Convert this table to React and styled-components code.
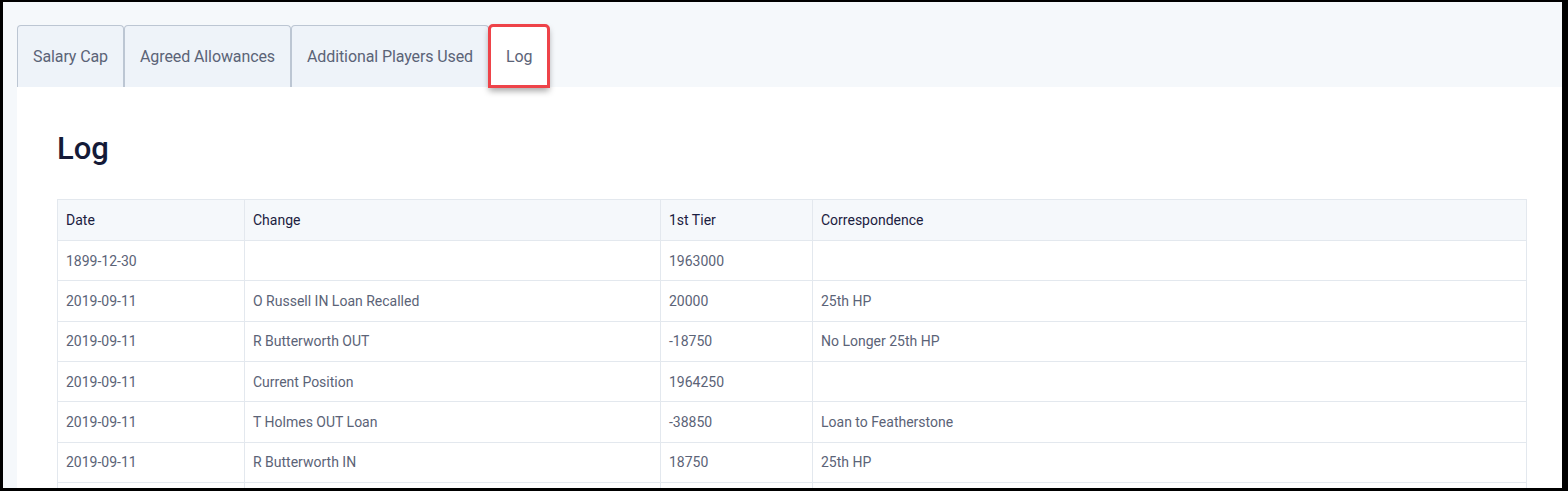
import React from 'react'
import styled, { createGlobalStyle } from 'styled-components'

const Global = createGlobalStyle`
  html, body {
    margin: 0;
    padding: 0;
    background: #000;
  }
  body {
    font-family: Roboto, "Liberation Sans", sans-serif;
  }
`

const Frame = styled.div`
  height: 491px;
  box-sizing: border-box;
  padding: 2px 6px 3px 3px;
  overflow: hidden;
`

const Screen = styled.div`
  height: 100%;
  background: #f5f8fb;
  padding: 23px 0 0 14px;
  box-sizing: border-box;
  overflow: hidden;
`

const TabBar = styled.div`
  display: flex;
  height: 62px;
`

const Tab = styled.div`
  display: flex;
  align-items: center;
  padding: 0 ${p => (p.$active ? '16px' : '15px')};
  border: 1px solid #bcc6d3;
  border-bottom: none;
  border-radius: 4px 4px 0 0;
  background: ${p => (p.$active ? '#fff' : '#eef3f9')};
  color: #5b6377;
  font-size: 16px;
  letter-spacing: -0.1px;
  position: relative;

  ${p =>
    p.$active &&
    `
    border-color: transparent;
    outline: 3px solid #ee4349;
    outline-offset: -2px;
    box-shadow: 0 4px 6px rgba(0, 0, 0, 0.35);
    z-index: 1;
  `}
`

const Panel = styled.div`
  background: #fff;
  padding: 0 35px 0 40px;
  height: 100%;
`

const Heading = styled.h1`
  margin: 0;
  padding: 44px 0 32px;
  font-size: 31px;
  font-weight: 500;
  color: #141a38;
  line-height: 36px;
`

const Table = styled.table`
  width: 100%;
  border-collapse: collapse;
  table-layout: fixed;
  font-size: 14px;
`

const Col = styled.col`
  width: ${p => p.$w || 'auto'};
`

const Th = styled.th`
  text-align: left;
  font-weight: 400;
  color: #1b2040;
  background: #f5f8fb;
  border: 1px solid #e3e8ee;
  padding: 0 8px;
  height: 40px;
`

const Td = styled.td`
  color: #5b6377;
  border: 1px solid #e3e8ee;
  padding: 0 8px;
  height: 39.35px;
`

const rows = [
  ['1899-12-30', '', '1963000', ''],
  ['2019-09-11', 'O Russell IN Loan Recalled', '20000', '25th HP'],
  ['2019-09-11', 'R Butterworth OUT', '-18750', 'No Longer 25th HP'],
  ['2019-09-11', 'Current Position', '1964250', ''],
  ['2019-09-11', 'T Holmes OUT Loan', '-38850', 'Loan to Featherstone'],
  ['2019-09-11', 'R Butterworth IN', '18750', '25th HP'],
  ['', '', '', ''],
]

export default function App() {
  return (
    <Frame>
      <Global />
      <Screen>
        <TabBar>
          <Tab>Salary Cap</Tab>
          <Tab>Agreed Allowances</Tab>
          <Tab>Additional Players Used</Tab>
          <Tab $active>Log</Tab>
        </TabBar>
        <Panel>
          <Heading>Log</Heading>
          <Table>
            <colgroup>
              <Col $w="187px" />
              <Col $w="416px" />
              <Col $w="152px" />
              <Col />
            </colgroup>
            <thead>
              <tr>
                <Th>Date</Th>
                <Th>Change</Th>
                <Th>1st Tier</Th>
                <Th>Correspondence</Th>
              </tr>
            </thead>
            <tbody>
              {rows.map((r, i) => (
                <tr key={i}>
                  {r.map((c, j) => (
                    <Td key={j}>{c}</Td>
                  ))}
                </tr>
              ))}
            </tbody>
          </Table>
        </Panel>
      </Screen>
    </Frame>
  )
}
